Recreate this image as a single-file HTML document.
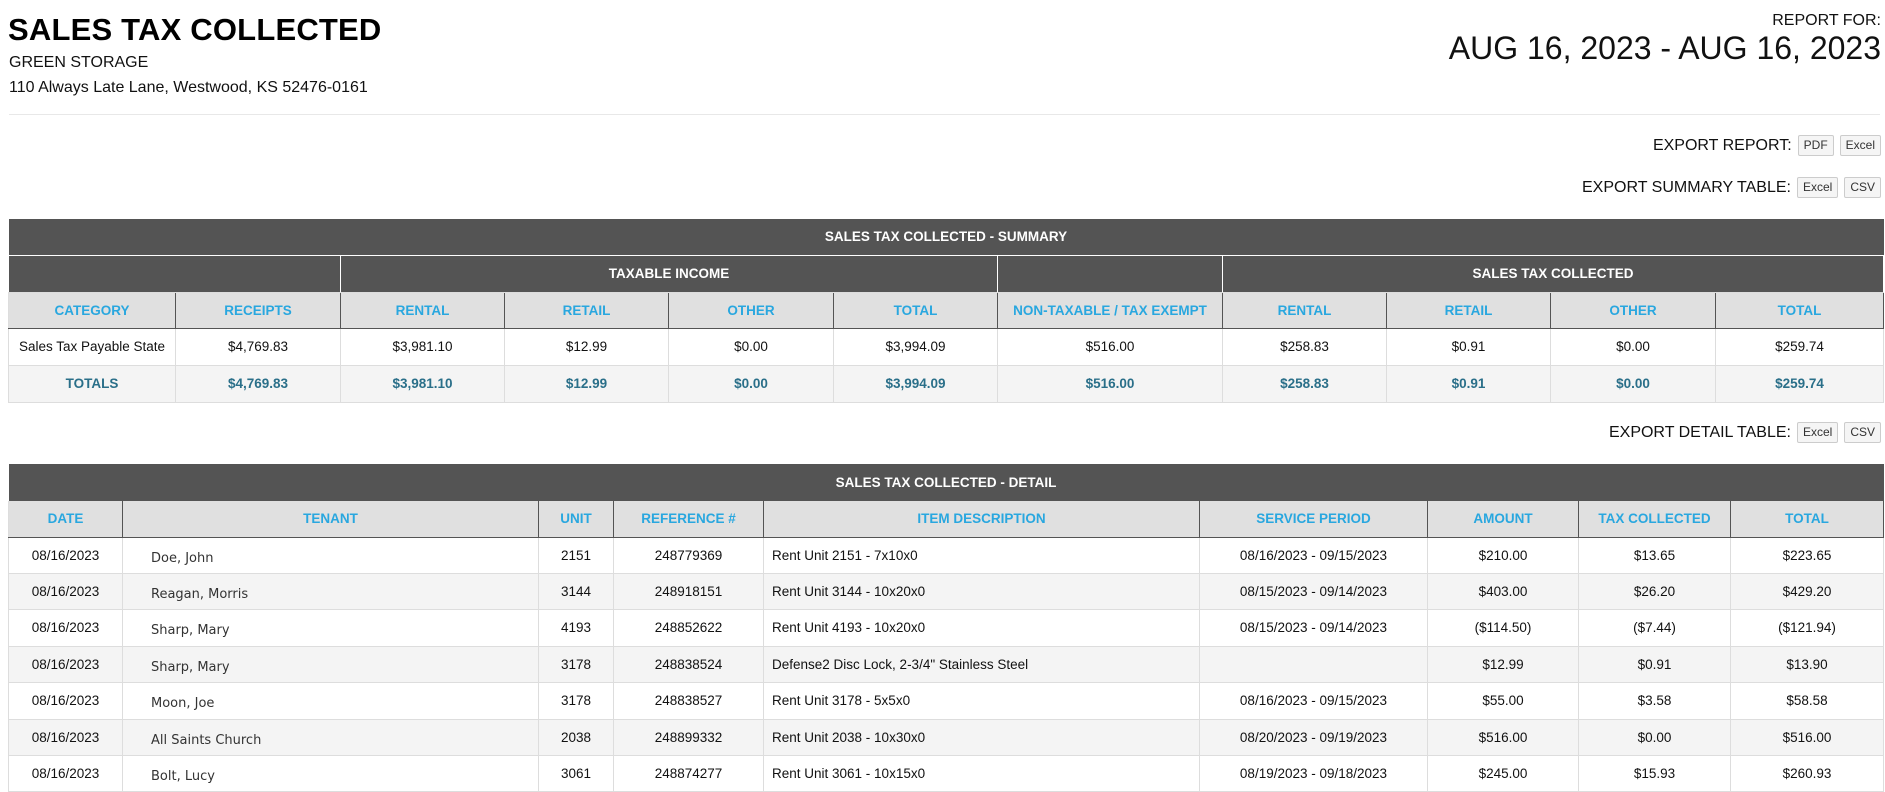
<!DOCTYPE html>
<html><head><meta charset="utf-8"><style>
*{box-sizing:border-box;margin:0;padding:0}
body{width:1885px;height:788px;overflow:hidden;background:#fff;font-family:"Liberation Sans",Arial,sans-serif;color:#111;position:relative}
h1{position:absolute;left:8px;top:12px;font-size:31px;font-weight:bold;letter-spacing:0.2px;color:#000}
.sub{position:absolute;left:9px;font-size:16px;color:#111}
.hr{position:absolute;left:9px;right:5px;top:114px;border-top:1px solid #e8e8e8}
.rf{position:absolute;right:4px;text-align:right}
.exp{position:absolute;right:4px;font-size:16px;display:flex;align-items:center;gap:6px;color:#111}
.btn{font-size:12px;border:1px solid #ccc;background:#f5f5f5;border-radius:2px;padding:0 5px;height:21px;line-height:19px;color:#333}
table{position:absolute;left:8px;width:1876px;border-collapse:collapse;table-layout:fixed;font-size:13.5px}
td,th{text-align:center;border:1px solid #ddd;overflow:hidden;white-space:nowrap}
.t{background:#545454;color:#fff;font-weight:bold;font-size:13.5px;border:none}
.sh th{background:#545454;color:#fff;font-size:13.5px;border-left:1px solid #fff;border-right:1px solid #fff;border-top:1px solid #fff}
.ch th{background:#e0e0e0;color:#29a7df;font-size:13.5px;font-weight:bold;border:1px solid #545454;border-top:none}
.ch th:first-child{border-left:1px solid #ddd}
.tot td{background:#f4f4f4;color:#2a6f89;font-weight:bold}
.alt td{background:#f4f4f4}
.nm{text-align:left;padding-left:28px;font-family:"DejaVu Sans",sans-serif;font-size:13px;color:#333;padding-top:6px}
.ds{text-align:left;padding-left:8px}
</style></head><body>
<h1>SALES TAX COLLECTED</h1>
<div class="sub" style="top:54px">GREEN STORAGE</div>
<div class="sub" style="top:79px">110 Always Late Lane, Westwood, KS 52476-0161</div>
<div class="rf" style="top:12px;font-size:16px">REPORT FOR:</div>
<div class="rf" style="top:30px;font-size:32px">AUG 16, 2023 - AUG 16, 2023</div>
<div class="hr"></div>
<div class="exp" style="top:135px">EXPORT REPORT: <span class="btn">PDF</span><span class="btn">Excel</span></div>
<div class="exp" style="top:177px">EXPORT SUMMARY TABLE: <span class="btn">Excel</span><span class="btn">CSV</span></div>
<table style="top:219px">
<colgroup><col style="width:167px"><col style="width:165px"><col style="width:164px"><col style="width:164px"><col style="width:165px"><col style="width:164px"><col style="width:225px"><col style="width:164px"><col style="width:164px"><col style="width:165px"><col></colgroup>
<tr style="height:36px"><th class="t" colspan="11">SALES TAX COLLECTED - SUMMARY</th></tr>
<tr class="sh" style="height:37px"><th colspan="2"></th><th colspan="4">TAXABLE INCOME</th><th></th><th colspan="4">SALES TAX COLLECTED</th></tr>
<tr class="ch" style="height:36px"><th>CATEGORY</th><th>RECEIPTS</th><th>RENTAL</th><th>RETAIL</th><th>OTHER</th><th>TOTAL</th><th>NON-TAXABLE / TAX EXEMPT</th><th>RENTAL</th><th>RETAIL</th><th>OTHER</th><th>TOTAL</th></tr>
<tr style="height:37px"><td>Sales Tax Payable State</td><td>$4,769.83</td><td>$3,981.10</td><td>$12.99</td><td>$0.00</td><td>$3,994.09</td><td>$516.00</td><td>$258.83</td><td>$0.91</td><td>$0.00</td><td>$259.74</td></tr>
<tr class="tot" style="height:37px"><td>TOTALS</td><td>$4,769.83</td><td>$3,981.10</td><td>$12.99</td><td>$0.00</td><td>$3,994.09</td><td>$516.00</td><td>$258.83</td><td>$0.91</td><td>$0.00</td><td>$259.74</td></tr>
</table>
<div class="exp" style="top:422px">EXPORT DETAIL TABLE: <span class="btn">Excel</span><span class="btn">CSV</span></div>
<table style="top:464px">
<colgroup><col style="width:114px"><col style="width:416px"><col style="width:75px"><col style="width:150px"><col style="width:436px"><col style="width:228px"><col style="width:151px"><col style="width:152px"><col></colgroup>
<tr style="height:37px"><th class="t" colspan="9">SALES TAX COLLECTED - DETAIL</th></tr>
<tr class="ch" style="height:36px"><th>DATE</th><th>TENANT</th><th>UNIT</th><th>REFERENCE #</th><th>ITEM DESCRIPTION</th><th>SERVICE PERIOD</th><th>AMOUNT</th><th>TAX COLLECTED</th><th>TOTAL</th></tr>
<tr style="height:36px"><td>08/16/2023</td><td class="nm">Doe, John</td><td>2151</td><td>248779369</td><td class="ds">Rent Unit 2151 - 7x10x0</td><td>08/16/2023 - 09/15/2023</td><td>$210.00</td><td>$13.65</td><td>$223.65</td></tr>
<tr class="alt" style="height:36px"><td>08/16/2023</td><td class="nm">Reagan, Morris</td><td>3144</td><td>248918151</td><td class="ds">Rent Unit 3144 - 10x20x0</td><td>08/15/2023 - 09/14/2023</td><td>$403.00</td><td>$26.20</td><td>$429.20</td></tr>
<tr style="height:37px"><td>08/16/2023</td><td class="nm">Sharp, Mary</td><td>4193</td><td>248852622</td><td class="ds">Rent Unit 4193 - 10x20x0</td><td>08/15/2023 - 09/14/2023</td><td>($114.50)</td><td>($7.44)</td><td>($121.94)</td></tr>
<tr class="alt" style="height:36px"><td>08/16/2023</td><td class="nm">Sharp, Mary</td><td>3178</td><td>248838524</td><td class="ds">Defense2 Disc Lock, 2-3/4" Stainless Steel</td><td></td><td>$12.99</td><td>$0.91</td><td>$13.90</td></tr>
<tr style="height:37px"><td>08/16/2023</td><td class="nm">Moon, Joe</td><td>3178</td><td>248838527</td><td class="ds">Rent Unit 3178 - 5x5x0</td><td>08/16/2023 - 09/15/2023</td><td>$55.00</td><td>$3.58</td><td>$58.58</td></tr>
<tr class="alt" style="height:36px"><td>08/16/2023</td><td class="nm">All Saints Church</td><td>2038</td><td>248899332</td><td class="ds">Rent Unit 2038 - 10x30x0</td><td>08/20/2023 - 09/19/2023</td><td>$516.00</td><td>$0.00</td><td>$516.00</td></tr>
<tr style="height:36px"><td>08/16/2023</td><td class="nm">Bolt, Lucy</td><td>3061</td><td>248874277</td><td class="ds">Rent Unit 3061 - 10x15x0</td><td>08/19/2023 - 09/18/2023</td><td>$245.00</td><td>$15.93</td><td>$260.93</td></tr>
</table>
</body></html>
